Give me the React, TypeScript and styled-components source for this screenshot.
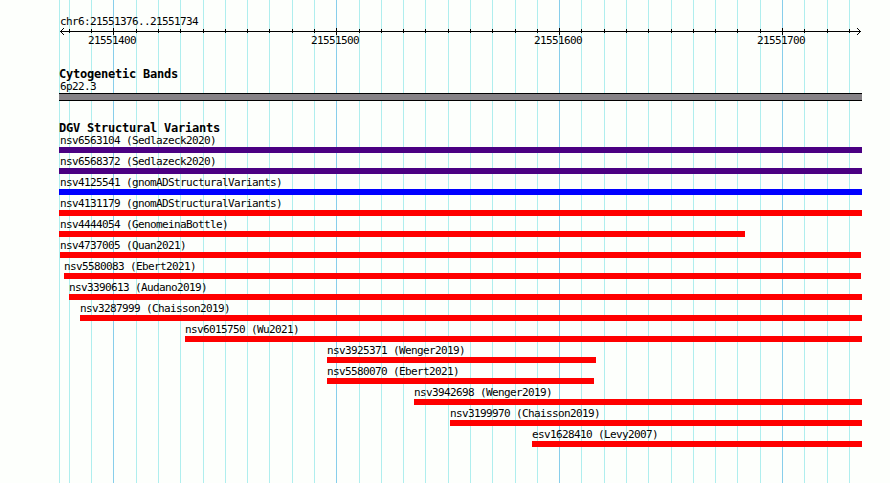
import React from 'react';
import styled, { createGlobalStyle } from 'styled-components';

const GlobalStyle = createGlobalStyle`
  html, body { margin: 0; padding: 0; background: #fdfffc; }
  body { overflow: hidden; }
`;

const LEFT = 59;
const MINOR = [
  59, 69, 91, 136, 158, 180, 203, 225, 247, 269, 292, 314, 359, 381, 403, 425, 448, 470,
  492, 515, 537, 581, 604, 626, 648, 671, 693, 715, 737, 760, 804, 827, 849,
];
const MAJOR = [
  { x: 113, label: '21551400' },
  { x: 336, label: '21551500' },
  { x: 559, label: '21551600' },
  { x: 782, label: '21551700' },
];

type Variant = { name: string; start: number; end: number; color: string };

const red = '#ff0000';
const indigo = '#4b0082';
const VARIANTS: Variant[] = [
  { name: 'nsv6563104 (Sedlazeck2020)', start: 59, end: 862, color: indigo },
  { name: 'nsv6568372 (Sedlazeck2020)', start: 59, end: 862, color: indigo },
  { name: 'nsv4125541 (gnomADStructuralVariants)', start: 59, end: 862, color: '#0000ff' },
  { name: 'nsv4131179 (gnomADStructuralVariants)', start: 59, end: 862, color: red },
  { name: 'nsv4444054 (GenomeinaBottle)', start: 59, end: 745, color: red },
  { name: 'nsv4737005 (Quan2021)', start: 60, end: 861, color: red },
  { name: 'nsv5580083 (Ebert2021)', start: 64, end: 861, color: red },
  { name: 'nsv3390613 (Audano2019)', start: 69, end: 862, color: red },
  { name: 'nsv3287999 (Chaisson2019)', start: 80, end: 862, color: red },
  { name: 'nsv6015750 (Wu2021)', start: 185, end: 862, color: red },
  { name: 'nsv3925371 (Wenger2019)', start: 327, end: 596, color: red },
  { name: 'nsv5580070 (Ebert2021)', start: 327, end: 594, color: red },
  { name: 'nsv3942698 (Wenger2019)', start: 414, end: 862, color: red },
  { name: 'nsv3199970 (Chaisson2019)', start: 450, end: 862, color: red },
  { name: 'esv1628410 (Levy2007)', start: 532, end: 862, color: red },
];

const Browser = styled.main`
  position: relative;
  box-sizing: border-box;
  width: 890px;
  height: 483px;
  padding: 14px 28px 0 ${LEFT}px;
  background: #fdfffc;
  color: #000;
  font: 11px/15px 'DejaVu Sans Mono', monospace;
  letter-spacing: -0.622px;
  white-space: pre;
  overflow: hidden;
`;

const GridLines = styled.svg`
  position: absolute;
  inset: 0;
  shape-rendering: crispEdges;
`;

const Tracks = styled.div`
  position: relative;
  display: flex;
  flex-direction: column;
`;

const RegionLabel = styled.div`
  height: 14px;
  padding-left: 1px;
`;

const Ruler = styled.svg`
  display: block;
  width: 803px;
  height: 7px;
  shape-rendering: crispEdges;
`;

const Scale = styled.div`
  display: flex;
  gap: 175px;
  height: 31px;
  padding-left: 29px;
  line-height: 12px;
`;

const ScaleLabel = styled.span`
  flex: 0 0 48px;
  width: 48px;
`;

const TrackTitle = styled.h2`
  height: 12px;
  margin: 0;
  font: bold 12px/17px 'DejaVu Sans Mono', monospace;
  letter-spacing: -0.225px;
`;

const BandLabel = styled.div`
  height: 15px;
  padding-left: 1px;
  line-height: 17px;
`;

const Band = styled.div`
  box-sizing: border-box;
  height: 8px;
  margin-bottom: 19px;
  border: solid #000;
  border-width: 1px 0;
  background: #868286;
`;

const VariantRow = styled.div<{ $start: number }>`
  height: 21px;
  margin-left: ${({ $start }) => $start - LEFT}px;
`;

const VariantName = styled.div<{ $inset: number }>`
  height: 15px;
  padding-left: ${({ $inset }) => $inset}px;
  line-height: 17px;
`;

const VariantBar = styled.div<{ $length: number; $color: string }>`
  width: ${({ $length }) => $length}px;
  height: 6px;
  background: ${({ $color }) => $color};
`;

export default function App() {
  return (
    <>
      <GlobalStyle />
      <Browser>
        <GridLines width="890" height="483" aria-hidden="true">
          {MINOR.map((x) => (
            <rect key={x} x={x} y="0" width="1" height="483" fill="#afeeee" />
          ))}
          {MAJOR.map(({ x }) => (
            <rect key={x} x={x} y="0" width="1" height="483" fill="#87ceeb" />
          ))}
        </GridLines>
        <Tracks>
          <RegionLabel>chr6:21551376..21551734</RegionLabel>
          <Ruler viewBox="59 28 803 7" aria-hidden="true">
            <rect x="60" y="31" width="801" height="1" />
            {MINOR.filter((x) => x > LEFT).map((x) => (
              <rect key={x} x={x} y="29" width="1" height="4" />
            ))}
            {MAJOR.map(({ x }) => (
              <rect key={x} x={x} y="28" width="1" height="7" />
            ))}
            {[1, 2, 3].map((d) => (
              <g key={d}>
                <rect x={60 + d} y={31 - d} width="1" height="1" />
                <rect x={60 + d} y={31 + d} width="1" height="1" />
                <rect x={860 - d} y={31 - d} width="1" height="1" />
                <rect x={860 - d} y={31 + d} width="1" height="1" />
              </g>
            ))}
          </Ruler>
          <Scale>
            {MAJOR.map(({ x, label }) => (
              <ScaleLabel key={x}>{label}</ScaleLabel>
            ))}
          </Scale>
          <TrackTitle>Cytogenetic Bands</TrackTitle>
          <BandLabel>6p22.3</BandLabel>
          <Band />
          <TrackTitle>DGV Structural Variants</TrackTitle>
          {VARIANTS.map(({ name, start, end, color }) => (
            <VariantRow key={name} $start={start}>
              <VariantName $inset={start === LEFT ? 1 : 0}>{name}</VariantName>
              <VariantBar $length={end - start} $color={color} />
            </VariantRow>
          ))}
        </Tracks>
      </Browser>
    </>
  );
}
